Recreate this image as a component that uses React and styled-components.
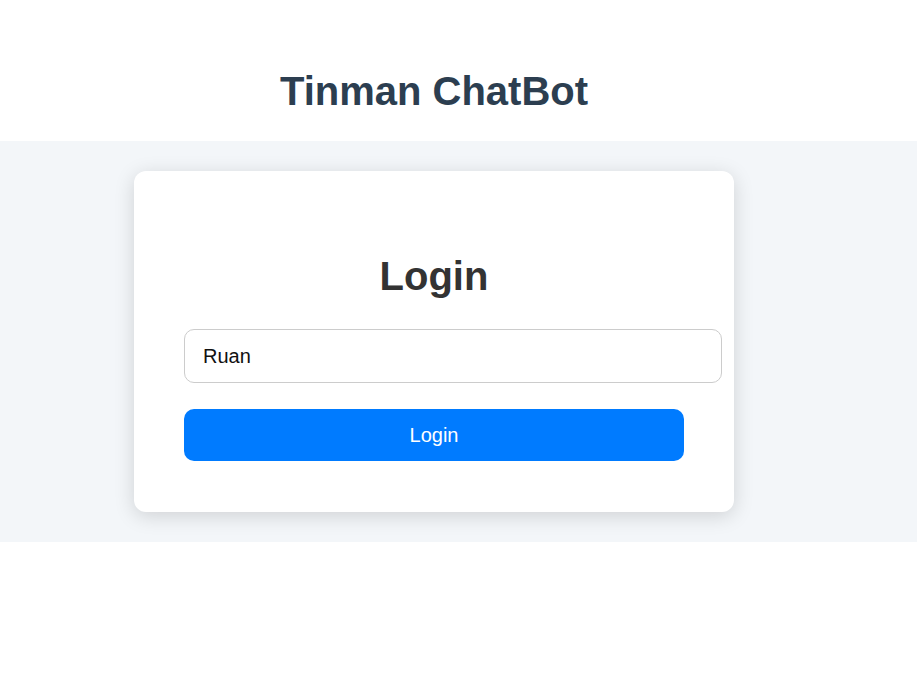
import React, { useState } from 'react'
import styled, { createGlobalStyle } from 'styled-components'

const GlobalStyle = createGlobalStyle`
body {
  margin: 0;
  background: #ffffff;
  font-family: "Liberation Sans", Arial, sans-serif;
}
`

const Header = styled.header`
box-sizing: border-box;
height: 141px;
padding: 68px 49px 0 0;
text-align: center;
`

const Title = styled.h1`
margin: 0;
font-size: 40px;
line-height: 46px;
font-weight: bold;
color: #2c3e50;
`

const Band = styled.main`
display: flex;
justify-content: center;
padding: 30px 49px 30px 0;
background: #f3f6f9;
`

const Card = styled.div`
box-sizing: border-box;
width: 600px;
padding: 50px 50px 51px;
background: #ffffff;
border-radius: 12px;
box-shadow: 0 4px 20px rgba(0, 0, 0, 0.15);
`

const Heading = styled.h2`
margin: 32px 0 30px;
font-size: 40px;
line-height: 46px;
font-weight: bold;
text-align: center;
color: #333333;
`

const Input = styled.input`
display: block;
width: 100%;
height: 52px;
margin: 0 0 26px;
padding: 0 18px;
font-family: inherit;
font-size: 20px;
color: #111111;
border: 1px solid #cccccc;
border-radius: 10px;
outline: none;
`

const Button = styled.button`
display: block;
width: 100%;
height: 52px;
font-family: inherit;
font-size: 20px;
color: #ffffff;
background: #007bff;
border: none;
border-radius: 10px;
cursor: pointer;
`

export default function App () {
  const [name, setName] = useState('Ruan')
  return (
    <>
      <GlobalStyle />
      <Header>
        <Title>Tinman ChatBot</Title>
      </Header>
      <Band>
        <Card>
          <Heading>Login</Heading>
          <Input value={name} onChange={e => setName(e.target.value)} />
          <Button>Login</Button>
        </Card>
      </Band>
    </>
  )
}
